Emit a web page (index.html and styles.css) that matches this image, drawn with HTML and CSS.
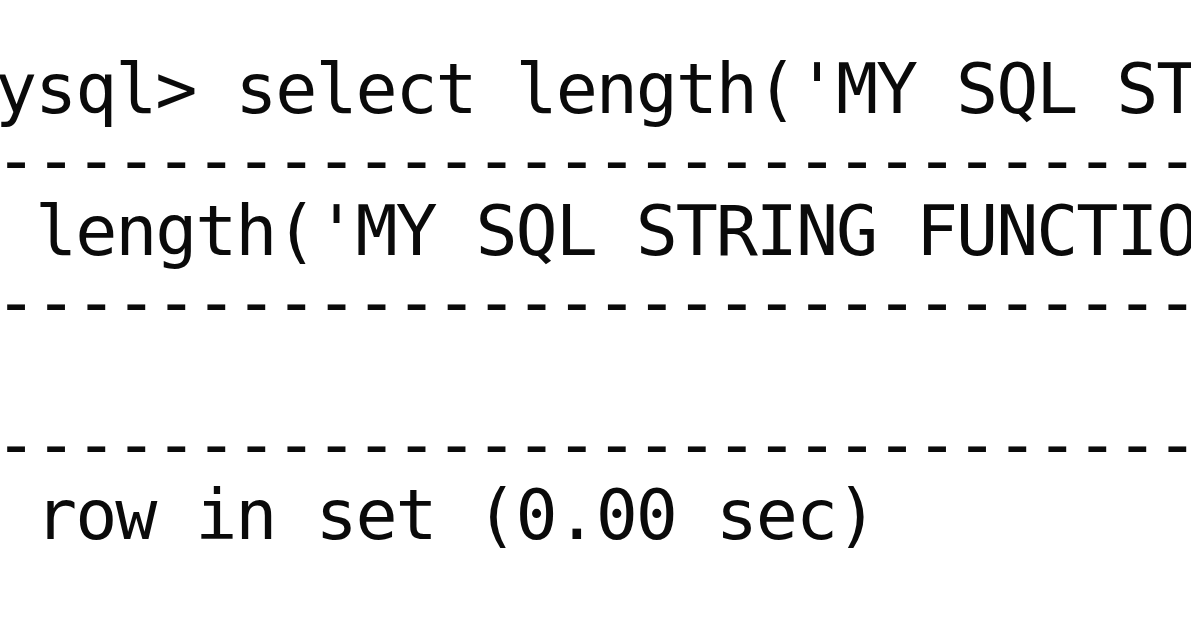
FILE: index.html
```html
<!DOCTYPE html>
<html>
<head>
<meta charset="utf-8">
<link rel="stylesheet" href="styles.css">
</head>
<body>
<div class="term">
<pre class="out">mysql&gt; select length('MY SQL STRING FUNCTIONS');
+-----------------------------------+
| length('MY SQL STRING FUNCTIONS') |
+-----------------------------------+
|                                31 |
+-----------------------------------+
1 row in set (0.00 sec)</pre>
</div>
</body>
</html>
```

FILE: styles.css
```css
html, body {
  margin: 0;
  padding: 0;
  background: #ffffff;
  width: 1191px;
  height: 628px;
  overflow: hidden;
}
.term {
  width: 1191px;
  height: 628px;
  overflow: hidden;
  padding-top: 54px;
  box-sizing: border-box;
}
.out {
  margin: 0 0 0 -45px;
  font-family: "DejaVu Sans Mono", monospace;
  font-size: 70px;
  letter-spacing: -2.1px;
  line-height: 71px;
  color: #0a0a0a;
  white-space: pre;
}
```
